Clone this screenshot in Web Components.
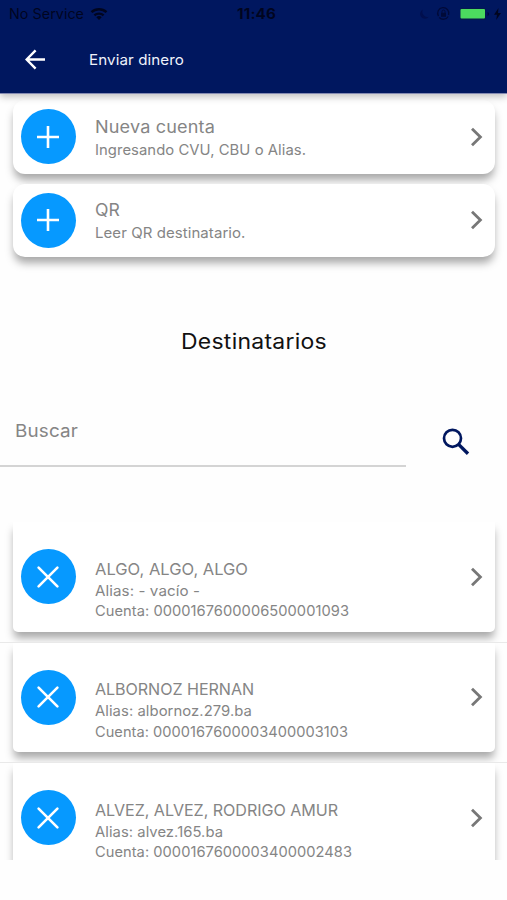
<!DOCTYPE html>
<html lang="es">
<head>
<meta charset="utf-8">
<title>Enviar dinero</title>
<style>
html,body{margin:0;padding:0;background:#fefefe}
body{font-family:Inter,"Open Sans",sans-serif;color:#858585;height:900px;overflow:hidden}
</style>
</head>
<body>
<transfer-page></transfer-page>
<script>
const define = (name, html, setup) => {
  const t = document.createElement('template');
  t.innerHTML = html;
  customElements.define(name, class extends HTMLElement {
    constructor() {
      super();
      this.attachShadow({mode: 'open'}).append(t.content.cloneNode(true));
    }
    connectedCallback() { if (setup) setup(this, this.shadowRoot); }
  });
};

// One line of text, widened or narrowed to span the width given in "span":
// most of the difference goes to the glyph width, the rest to the tracking.
define('line-text', `<style>
  :host{display:block;white-space:pre}
  span{display:inline-block;transform-origin:0 50%}
</style><span></span>`, (el, root) => {
  const s = root.querySelector('span');
  s.textContent = el.getAttribute('text');
  const span = parseFloat(el.getAttribute('span'));
  const natural = s.getBoundingClientRect().width;
  const scale = Math.pow(span / natural, 0.8);
  s.style.letterSpacing = (span / scale - natural) / s.textContent.length + 'px';
  s.style.transform = `scaleX(${scale})`;
  el.style.width = span + 'px';
});

define('status-bar', `<style>
  :host{display:grid;grid-template-columns:1fr auto 1fr;align-items:center;height:27px;padding:0 6px 0 9px;color:#00051f;font-size:14px;line-height:27px;box-sizing:border-box}
  div{display:flex;align-items:center}
  .r{justify-content:flex-end}
  .time{font-weight:700;margin-left:3px}
  svg{display:block}
</style>
<div><line-text text="No Service" span="75"></line-text>
<svg style="margin-left:6px" width="18" height="14" viewBox="0 0 18 14" fill="none" stroke="#00051f" stroke-width="2.4"><path d="M1.5 5.2a11 11 0 0 1 15 0M4.4 8.4a6.8 6.8 0 0 1 9.2 0"/><path d="M9 13L6.3 10.3a4 4 0 0 1 5.4 0z" fill="#00051f" stroke="none"/></svg></div>
<line-text class="time" text="11:46" span="39"></line-text>
<div class="r">
<svg width="10" height="12" viewBox="0 0 10 12"><path d="M3 1.5a5 5 0 0 0 5.8 7.2A4.8 4.8 0 1 1 3 1.5z" fill="#000f4e"/></svg>
<svg style="margin-left:6px" width="15" height="15" viewBox="0 0 15 15" fill="none" stroke="#000a38"><path d="M2.5 10.2A5.6 5.6 0 1 1 12.6 9M12.2 10.5A5.6 5.6 0 0 1 3.3 11.5" stroke-width="1.3"/><rect x="5" y="6.8" width="5" height="4" fill="#000a38" stroke="none"/><path d="M6 7V5.5a1.5 1.5 0 0 1 3 0V7"/></svg>
<svg style="margin-left:9px" width="33" height="14" viewBox="0 0 33 14"><rect x="-.5" y="1" width="26.5" height="12" rx="2.5" fill="#06194d"/><rect x=".5" y="2" width="24.5" height="9.5" rx="1" fill="#4cdb5f"/><path d="M27.5 5v4q1.6-.4 1.6-2t-1.6-2z" fill="#00083a"/></svg>
<svg style="margin-left:1px" width="7" height="12" viewBox="0 0 7 12"><path d="M4.5 0L0 6.7h3L2.2 12 7 5H4z" fill="#00051f"/></svg>
</div>`);

define('app-header', `<style>
  :host{display:block;height:93px;background:#00175f;border-bottom:1px solid #848ab2;box-sizing:content-box;color:#eff2fa;box-shadow:0 3px 7px rgba(0,0,0,.24);font-size:14.3px;line-height:20px;position:relative}
  .bar{display:flex;align-items:center;height:65px;padding-left:25px}
  svg{display:block;margin-right:43px}
</style>
<status-bar></status-bar>
<div class="bar"><svg width="21" height="21" viewBox="0 0 21 21" fill="none" stroke="#fff" stroke-width="2.4"><path d="M20 10.5H2M10.6 1.3L1.6 10.5l9 9.2"/></svg><line-text text="Enviar dinero" span="95"></line-text></div>`);

define('icon-disc', `<style>
  :host{display:flex;align-items:center;justify-content:center;width:55px;height:55px;border-radius:50%;background:#0699ff;flex:none}
  svg{display:block}
</style><svg width="24" height="24" viewBox="0 0 24 24" fill="none" stroke="#fff" stroke-width="2.6"><path/></svg>`,
(el, root) => {
  const plus = el.getAttribute('icon') === 'plus';
  const p = root.querySelector('path');
  p.setAttribute('d', plus ? 'M1 12h22M12 1v22' : 'M2.6 2.6L21.4 21.4M21.4 2.6L2.6 21.4');
  if (!plus) p.setAttribute('stroke-linecap', 'round');
});

define('action-card', `<style>
  :host{display:flex;align-items:center;box-sizing:border-box;height:73.5px;margin:0 12.5px 0 13px;padding:0 11px 0 7.5px;background:#fff;border-radius:var(--radius,12px);box-shadow:0 7px 8px -1px rgba(0,0,0,.34)}
  .t{flex:1;margin-left:19.5px;padding-top:var(--drop,.5px)}
  svg{display:block}
</style><icon-disc></icon-disc><div class="t"><slot></slot></div>
<svg width="14" height="20" viewBox="0 0 14 20" fill="none" stroke="#777" stroke-width="2.8"><path d="M2 1.8l8.4 8.2L2 18.2"/></svg>`,
(el, root) => root.querySelector('icon-disc').setAttribute('icon', el.getAttribute('icon')));

define('search-row', `<style>
  :host{display:flex;height:74px}
  .f{box-sizing:border-box;width:406px;height:74px;border-bottom:2px solid #d4d4d4;padding:25px 0 0 15px;font-size:17.8px;line-height:26px}
  svg{display:block;margin:35px 0 0 36px}
</style><div class="f"><line-text text="Buscar" span="63"></line-text></div>
<svg width="28" height="28" viewBox="0 0 28 28" fill="none" stroke="#00175f"><circle cx="10.5" cy="10.3" r="8.5" stroke-width="2.7"/><path d="M16.6 16.4L26 25.8" stroke-width="3.4"/></svg>`);

define('recipient-item', `<style>
  :host{display:block;box-sizing:border-box;height:120.5px;border-bottom:1px solid #e9e9e9;overflow:hidden;background:#fefefe}
  action-card{height:109.5px;--radius:0 0 5px 5px;--drop:24.5px}
  .n{font-size:16.5px;line-height:24px}
  .d{font-size:14.3px;line-height:20.5px}
</style><action-card icon="close"><line-text class="n"></line-text><line-text class="d a"></line-text><line-text class="d c"></line-text></action-card>`);
</script>
<script>
// Recipient rows read text and span pairs for the name, alias and account lines.
const page = document.createElement('template');
const people = [
  ['ALGO, ALGO, ALGO', 153, 'Alias: - vacío -', 105, 'Cuenta: 0000167600006500001093', 254],
  ['ALBORNOZ HERNAN', 159, 'Alias: albornoz.279.ba', 157, 'Cuenta: 0000167600003400003103', 253],
  ['ALVEZ, ALVEZ, RODRIGO AMUR', 243, 'Alias: alvez.165.ba', 128, 'Cuenta: 0000167600003400002483', 257]
];
page.innerHTML = `<style>
  :host{display:block}
  .top{display:grid;gap:10px;padding-top:6px}
  .n{font-size:17px;line-height:24px}
  .d{font-size:14.4px;line-height:21px}
  h1{display:flex;justify-content:center;margin:69px 0 0;font-weight:400;font-size:20.8px;line-height:32px;color:#111}
  search-row{margin-top:35px}
  .list{margin-top:55px;height:338px;overflow:hidden}
</style>
<app-header></app-header>
<div class="top">
<action-card icon="plus"><line-text class="n" text="Nueva cuenta" span="120"></line-text><line-text class="d" text="Ingresando CVU, CBU o Alias." span="211"></line-text></action-card>
<action-card icon="plus"><line-text class="n" text="QR" span="25"></line-text><line-text class="d" text="Leer QR destinatario." span="150.5"></line-text></action-card>
</div>
<h1><line-text text="Destinatarios" span="146"></line-text></h1>
<search-row></search-row>
<div class="list">${people.map(() => '<recipient-item></recipient-item>').join('')}</div>`;
customElements.define('transfer-page', class extends HTMLElement {
  constructor() {
    super();
    const root = this.attachShadow({mode: 'open'});
    const body = document.importNode(page.content, true);
    body.querySelectorAll('recipient-item').forEach((item, i) => {
      item.shadowRoot.querySelectorAll('line-text').forEach((line, j) => {
        line.setAttribute('text', people[i][j * 2]);
        line.setAttribute('span', people[i][j * 2 + 1]);
      });
    });
    root.append(body);
  }
});
</script>
</body>
</html>
